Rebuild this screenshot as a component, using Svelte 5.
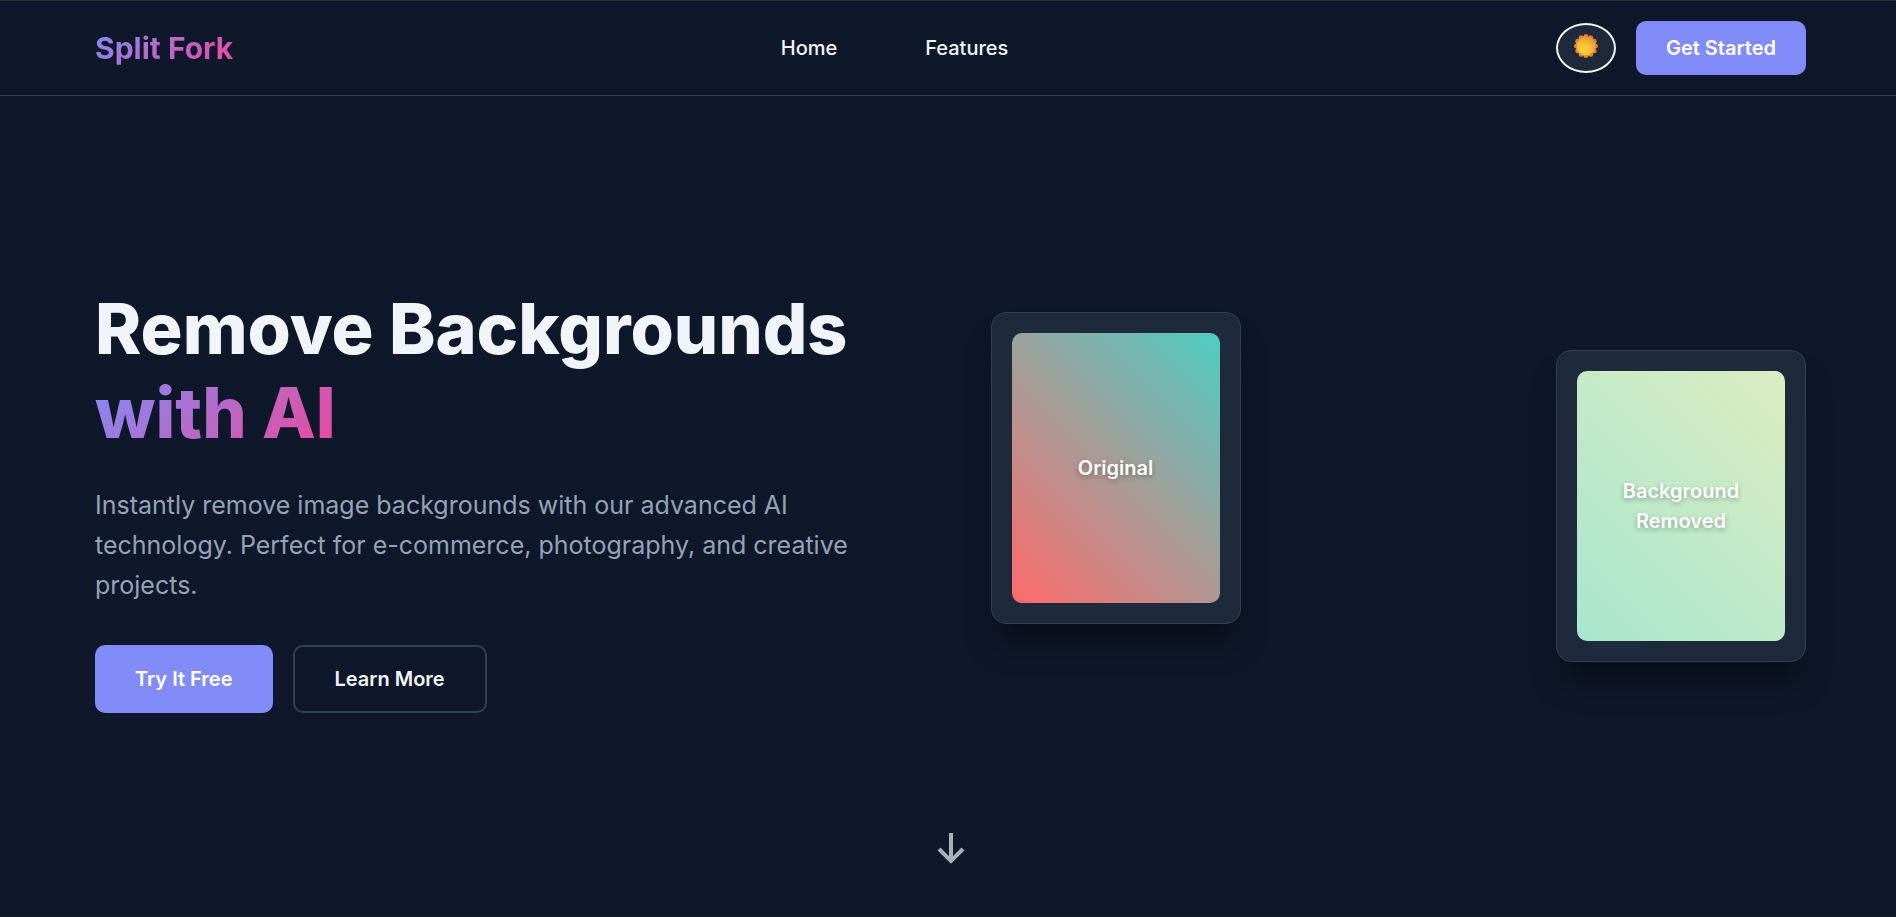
<script>
  let dark = $state(true);
  const links = ['Home', 'Features'];
  const petals = Array.from({ length: 12 }, (_, i) => {
    const a = (i * Math.PI) / 6;
    return { x: 12 + 9.7 * Math.sin(a), y: 12 - 9.7 * Math.cos(a) };
  });
</script>

<div class="page">
  <header>
    <a class="logo accent" href="#home">Split Fork</a>
    <nav>
      {#each links as link}
        <a href={'#' + link.toLowerCase()}>{link}</a>
      {/each}
    </nav>
    <div class="actions">
      <button class="toggle" aria-label="Toggle theme" aria-pressed={dark} onclick={() => (dark = !dark)}>
        <svg viewBox="0 0 24 24" width="24" height="24" aria-hidden="true">
          <defs>
            <linearGradient id="rim" x1="0" y1="1" x2="1" y2="0">
              <stop offset="0" stop-color="#f99b2e" />
              <stop offset="1" stop-color="#d96a3c" />
            </linearGradient>
            <radialGradient id="core" cx="0.35" cy="0.75" r="0.8">
              <stop offset="0" stop-color="#ffd43b" />
              <stop offset="0.5" stop-color="#f6bf36" />
              <stop offset="1" stop-color="#dd9a35" />
            </radialGradient>
          </defs>
          <g fill="url(#rim)">
            <circle cx="12" cy="12" r="10.5" />
            {#each petals as p}
              <circle cx={p.x} cy={p.y} r="2.3" />
            {/each}
          </g>
          <circle cx="12" cy="12" r="9.3" fill="url(#core)" />
        </svg>
      </button>
      <button class="primary">Get Started</button>
    </div>
  </header>

  <main>
    <section class="copy">
      <h1>Remove Backgrounds <span class="accent">with AI</span></h1>
      <p>
        Instantly remove image backgrounds with our advanced AI technology. Perfect for e-commerce,
        photography, and creative projects.
      </p>
      <div class="cta">
        <button class="primary large">Try It Free</button>
        <button class="outline large">Learn More</button>
      </div>
    </section>
    <section class="visual">
      <div class="card"><div class="picture original">Original</div></div>
      <div class="card lowered"><div class="picture removed">Background Removed</div></div>
    </section>
    <a class="scroll" href="#features" aria-label="Scroll down">
      <svg viewBox="0 0 30 34" width="30" height="34" aria-hidden="true">
        <path d="M15 1v28M3 17l12 12 12-12" fill="none" stroke="#a9afb9" stroke-width="4" />
      </svg>
    </a>
  </main>
</div>

<style>
  :global(body) {
    margin: 0;
    background: #0f172a;
  }
  .page {
    box-sizing: border-box;
    min-height: 100vh;
    display: flex;
    flex-direction: column;
    border-top: 1px solid #302f34;
    border-bottom: 1px solid #1d2028;
    background: #0f172a;
    color: #f1f5f9;
    font-family: Inter, sans-serif;
    font-size: 20px;
    line-height: 30px;
  }
  a {
    color: inherit;
    text-decoration: none;
  }
  header {
    display: flex;
    align-items: center;
    justify-content: space-between;
    padding: 20px 90px 20px 95px;
    border-bottom: 1px solid #334155;
  }
  .accent {
    background: linear-gradient(135deg, #818cf8, #ec4899);
    background-clip: text;
    -webkit-background-clip: text;
    color: transparent;
  }
  .logo {
    font-size: 30px;
    line-height: 48px;
    font-weight: 700;
  }
  nav {
    display: flex;
    gap: 88px;
    font-weight: 500;
  }
  .actions {
    display: flex;
    align-items: center;
    gap: 20px;
  }
  button {
    box-sizing: border-box;
    font: inherit;
    font-weight: 600;
    border: 0;
    border-radius: 10px;
    padding: 12px 30px;
    cursor: pointer;
  }
  .toggle {
    display: flex;
    align-items: center;
    justify-content: center;
    width: 60px;
    height: 50px;
    padding: 0 0 4px;
    border: 2px solid #f1f5f9;
    border-radius: 50%;
    background: #1e293b;
  }
  .primary {
    background: #818cf8;
    color: #fff;
  }
  .large {
    padding: 19px 40px;
  }
  .outline {
    border: 2px solid #334155;
    padding-block: 17px;
    background: transparent;
    color: #f1f5f9;
  }
  main {
    position: relative;
    flex: 1;
    display: grid;
    grid-template-columns: 1fr 1fr;
    align-items: center;
    gap: 80px;
    padding: 0 90px 12px 95px;
  }
  h1 {
    margin: 0 0 30px;
    font-size: 70px;
    line-height: 84px;
    font-weight: 800;
  }
  h1 span {
    display: inline-block;
  }
  p {
    margin: 0 0 40px;
    color: #94a3b8;
    font-size: 25px;
    line-height: 40px;
  }
  .cta {
    display: flex;
    gap: 20px;
  }
  .visual {
    display: flex;
    align-items: flex-start;
    justify-content: space-between;
    min-height: 376px;
  }
  .card {
    box-sizing: border-box;
    width: 250px;
    padding: 20px;
    border: 1px solid #334155;
    border-radius: 15px;
    background: #1e293b;
    box-shadow: 0 25px 31px -6px rgba(0, 0, 0, 0.4);
  }
  .lowered {
    margin-top: 38px;
  }
  .picture {
    box-sizing: border-box;
    display: flex;
    align-items: center;
    justify-content: center;
    height: 270px;
    padding: 20px;
    border-radius: 10px;
    color: #fff;
    font-weight: 600;
    text-align: center;
    text-shadow: 0 2px 5px rgba(0, 0, 0, 0.3);
  }
  .original {
    background: linear-gradient(45deg, #ff6b6b, #4ecdc4);
  }
  .removed {
    background: linear-gradient(45deg, #a8e6cf, #dcedc1);
  }
  .scroll {
    position: absolute;
    left: 50%;
    bottom: 50px;
    display: flex;
    margin-left: -12px;
  }
</style>
